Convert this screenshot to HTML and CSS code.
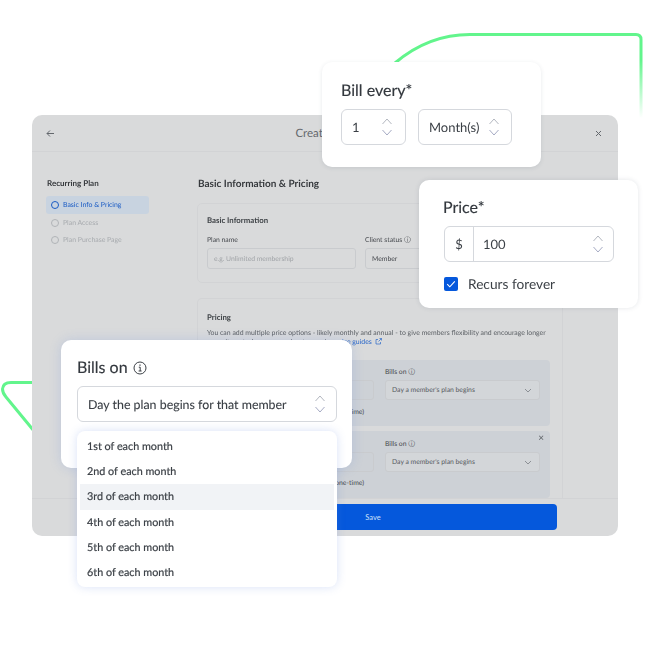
FILE: index.html
```html
<!DOCTYPE html>
<html lang="en">
<head>
<meta charset="utf-8">
<title>Create plan</title>
<link rel="stylesheet" href="styles.css">
</head>
<body>
<div class="stage">
  <svg class="deco" width="651" height="651" viewBox="0 0 651 651" fill="none">
    <defs>
      <linearGradient id="fade" gradientUnits="userSpaceOnUse" x1="0" y1="60" x2="0" y2="118">
        <stop offset="0" stop-color="#62f58c"/>
        <stop offset="1" stop-color="#62f58c" stop-opacity="0"/>
      </linearGradient>
    </defs>
    <path class="green" d="M395 63 C415 46 440 34.500 470 34.500 L636 34.500 Q641 34.500 641 39.500 L641 60"/>
    <path class="fade" d="M641 60 L641 118"/>
    <path class="green" d="M34 382.500 L11 382.500 Q3 382.500 2.500 389 Q2.500 393 6 397 L34 431"/>
  </svg>

  <section class="modal">
    <header class="modal-head">
      <svg class="head-svg" width="9" height="9" viewBox="0 0 9 9"><path d="M8 4.500H1M4 1.500l-3 3 3 3"/></svg>
      <span class="modal-title">Create Plan</span>
      <svg class="head-svg" width="9" height="9" viewBox="0 0 9 9"><path d="M2 2l5 5M7 2L2 7"/></svg>
    </header>
    <div class="modal-body">
      <nav class="side">
        <h2 class="side-title">Recurring Plan</h2>
        <div class="step active"><i class="dot"></i>Basic Info &amp; Pricing</div>
        <div class="step"><i class="dot"></i>Plan Access</div>
        <div class="step"><i class="dot"></i>Plan Purchase Page</div>
      </nav>
      <div class="content">
        <h1 class="content-title">Basic Information &amp; Pricing</h1>
        <div class="panel basic">
          <h3 class="panel-title">Basic Information</h3>
          <div class="basic-row">
            <label class="field name"><span class="lab">Plan name</span><span class="inp ph">e.g. Unlimited membership</span></label>
            <label class="field status"><span class="lab">Client status ⓘ</span><span class="inp">Member</span></label>
          </div>
        </div>
        <div class="panel pricing">
          <h3 class="panel-title">Pricing</h3>
          <p class="desc">You can add multiple price options - likely monthly and annual - to give members flexibility and encourage longer commitments. Learn more about recurring <span class="link">price guides <svg class="ext" width="7" height="7" viewBox="0 0 7 7"><path d="M3 1.500H1V6h4.500V4M3.500 3.500L6.500.500M4.500.500h2v2"/></svg></span></p>
          <div class="option">
            <span class="inp left-inp"></span>
            <div class="opt-right"><span class="lab">Bills on ⓘ</span><span class="inp sel">Day a member's plan begins<svg class="chev" width="8" height="5" viewBox="0 0 8 5"><path d="M1 1l3 3 3-3"/></svg></span></div>
            <span class="one-time">Recurs forever (one-time)</span>
          </div>
          <div class="option second">
            <span class="opt-x">×</span>
            <span class="inp left-inp"></span>
            <div class="opt-right"><span class="lab">Bills on ⓘ</span><span class="inp sel">Day a member's plan begins<svg class="chev" width="8" height="5" viewBox="0 0 8 5"><path d="M1 1l3 3 3-3"/></svg></span></div>
            <span class="one-time">Recurs forever (one-time)</span>
          </div>
        </div>
      </div>
    </div>
    <footer class="modal-foot"><button class="save">Save</button></footer>
  </section>

  <div class="card bill">
    <div class="card-title">Bill every*</div>
    <div class="bill-row">
      <div class="box b-num"><span>1</span>
        <svg class="updown" width="12" height="18" viewBox="0 0 12 18"><path d="M1.500 6l4.500-5 4.500 5"/><path class="low" d="M1.500 12l4.500 5 4.500-5"/></svg>
      </div>
      <div class="box b-unit"><span>Month(s)</span>
        <svg class="updown" width="12" height="18" viewBox="0 0 12 18"><path d="M1.500 6l4.500-5 4.500 5"/><path class="low" d="M1.500 12l4.500 5 4.500-5"/></svg>
      </div>
    </div>
  </div>

  <div class="card price">
    <div class="card-title">Price*</div>
    <div class="box b-price"><span class="cur">$</span><span class="amt">100</span>
      <svg class="updown" width="12" height="18" viewBox="0 0 12 18"><path d="M1.500 6l4.500-5 4.500 5"/><path class="low" d="M1.500 12l4.500 5 4.500-5"/></svg>
    </div>
    <div class="check-row">
      <svg class="check" width="14" height="14" viewBox="0 0 14 14"><rect width="14" height="14" rx="2" fill="#0558dc"/><path d="M3.200 7.200l2.600 2.600 5-5.400" fill="none" stroke="#fff" stroke-width="1.100"/></svg>
      <span>Recurs forever</span>
    </div>
  </div>

  <div class="card bills">
    <div class="card-title">Bills on
      <svg class="info" width="14" height="14" viewBox="0 0 14 14" fill="none"><circle cx="7" cy="7" r="6" stroke="#3a3f45" stroke-width="1"/><path d="M5.800 6.200H7.200V10M5.600 10H8.600" stroke="#3a3f45" stroke-width="1"/><path d="M7 3.600v1.200" stroke="#3a3f45" stroke-width="1.200"/></svg>
    </div>
    <div class="box b-day"><span>Day the plan begins for that member</span>
      <svg class="updown" width="12" height="18" viewBox="0 0 12 18"><path d="M1.500 6l4.500-5 4.500 5"/><path class="low" d="M1.500 12l4.500 5 4.500-5"/></svg>
    </div>
  </div>

  <ul class="menu">
    <li>1st of each month</li>
    <li>2nd of each month</li>
    <li class="hl">3rd of each month</li>
    <li>4th of each month</li>
    <li>5th of each month</li>
    <li>6th of each month</li>
  </ul>
</div>
</body>
</html>
```
FILE: styles.css
```css
* { box-sizing: border-box; }
html, body { margin: 0; padding: 0; background: #fff; }
body { font-family: Lato, "Open Sans", sans-serif; color: #3a3f45; text-rendering: geometricPrecision; }
.stage { position: relative; width: 651px; height: 651px; overflow: hidden; }
.deco { position: absolute; left: 0; top: 0; }
.green { stroke: #62f58c; stroke-width: 3; }
.fade { stroke: url(#fade); stroke-width: 3; }

.modal {
  position: absolute; left: 32px; top: 115px; width: 586px; height: 421px;
  background: #d9dadb; border-radius: 10px; display: flex; flex-direction: column; overflow: hidden;
}
.modal-head {
  height: 37px; flex: none; display: flex; align-items: center; justify-content: space-between;
  padding: 0 15px 0 14px; border-bottom: 1px solid #d2d3d5;
}
.head-svg { fill: none; stroke: #63676c; stroke-width: 1; flex: none; }
.modal-title { font-size: 11.500px; color: #63676c; }
.modal-body { flex: 1; display: flex; min-height: 0; filter: blur(.3px); }
.side { width: 165px; flex: none; padding: 26px 0 0 14px; }
.side-title { margin: 0 0 7px 1px; font-size: 8px; line-height: 11px; font-weight: 700; color: #36393d; }
.step {
  width: 103px; height: 17px; border-radius: 3px; display: flex; align-items: center;
  padding-left: 5px; gap: 4px; font-size: 6.900px; color: #a8abaf;
}
.step.active { height: 18px; background: #c8d3e0; color: #1a5bc4; }
.dot { width: 8px; height: 8px; border-radius: 50%; border: 1px solid #b0b3b7; flex: none; }
.active .dot { border-color: #1a5bc4; }
.content { flex: 1; min-width: 0; padding: 26px 0 0 0; }
.content-title { margin: 0 0 12px 1px; font-size: 10px; line-height: 13px; font-weight: 700; color: #36393d; }
.panel { border: 1px solid #d2d3d5; border-radius: 5px; width: 366px; }
.basic { height: 80px; padding: 10px 9px 0; margin-bottom: 15px; }
.panel-title { margin: 0; font-size: 7.800px; line-height: 12px; font-weight: 700; color: #3f4347; }
.basic-row { display: flex; gap: 9px; margin-top: 10px; }
.field { display: flex; flex-direction: column; gap: 3px; }
.lab { font-size: 6.800px; line-height: 9px; color: #46494e; }
.name { width: 149px; }
.status { width: 150px; }
.inp {
  height: 21px; border: 1px solid #c9cbce; border-radius: 3px; padding: 0 6px;
  font-size: 6.800px; display: flex; align-items: center; color: #46494e;
}
.ph { color: #a1a4a8; }
.pricing { height: 200px; padding: 12px 9px 0; border-bottom: 0; border-radius: 5px 5px 0 0; }
.desc { margin: 6px 0 13px; font-size: 6.900px; line-height: 9px; color: #5d6166; width: 340px; }
.link { color: #2b68c9; }
.ext { fill: none; stroke: #2b68c9; stroke-width: .7; margin-left: 1px; vertical-align: -1px; }
.option {
  margin-left: 9px; width: 334px; height: 66px; margin-bottom: 5px; background: #cdd1d6;
  border-radius: 4px; padding: 8px 10px 0 169px; position: relative;
}
.second { padding-top: 9px; height: 67px; }
.left-inp { position: absolute; left: 60px; top: 20px; width: 98px; height: 20px; }
.second .left-inp { top: 21px; }
.opt-right { display: flex; flex-direction: column; gap: 3px; width: 155px; }
.sel { height: 20px; justify-content: space-between; padding-right: 7px; background: #d3d6d9; color: #565a5f; font-weight: 400; }
.chev { fill: none; stroke: #8c9095; stroke-width: 1; }
.opt-x { position: absolute; right: 6px; top: 1px; font-size: 10px; color: #5d6166; }
.one-time { position: absolute; right: 186px; top: 48px; font-size: 6.800px; color: #46494e; }
.modal-foot { height: 38px; flex: none; border-top: 1px solid #d2d3d5; padding: 5px 61px 0 157px; }
.save {
  display: block; width: 100%; height: 26px; border: 0; border-radius: 4px; background: #0558dc;
  color: #cfe0fa; font: 7.500px Lato, sans-serif;
}

.card { position: absolute; background: #fff; border-radius: 10px; }
.card-title { font-size: 16px; line-height: 20px; color: #33383e; -webkit-text-stroke: .15px #33383e; }
.box {
  border: 1px solid #d5d8dd; border-radius: 6px; height: 36px; display: flex; align-items: center;
  justify-content: space-between; font-size: 13px; color: #3a3f45;
}
.updown { fill: none; stroke: #b3b7c0; stroke-width: 1; flex: none; }
.updown .low { stroke: #a6abc4; }

.bill { left: 322px; top: 62px; width: 219px; height: 105px; padding: 19px 19px 0; box-shadow: 0 1px 4px rgba(60,70,90,.12); }
.bill-row { display: flex; gap: 12px; margin-top: 8px; }
.b-num { width: 65px; padding: 0 12px 0 10px; }
.b-unit { width: 94px; padding: 0 11px 0 10px; }

.price { left: 419px; top: 180px; width: 219px; height: 128px; padding: 18px 24px 0 25px; box-shadow: 0 0 5px rgba(60,70,90,.14); }
.price .card-title { margin-left: -1px; }
.b-price { width: 170px; height: 36px; margin-top: 8px; padding-right: 9px; justify-content: flex-start; }
.cur { width: 29px; height: 100%; display: flex; align-items: center; justify-content: center; border-right: 1px solid #d5d8dd; flex: none; }
.amt { padding-left: 9px; flex: 1; }
.check-row { display: flex; align-items: center; gap: 10px; margin-top: 13px; font-size: 13.700px; line-height: 18px; color: #3a3f45; }
.check { flex: none; }

.bills { left: 61px; top: 340px; width: 291px; height: 128px; padding: 18px 16px 0; box-shadow: 0 0 12px rgba(90,130,220,.22); }
.bills .card-title { display: flex; align-items: center; gap: 5px; }
.info { flex: none; }
.b-day { width: 260px; margin-top: 8px; padding: 0 10px; font-size: 12.400px; -webkit-text-stroke: .1px #3a3f45; }

.menu {
  position: absolute; left: 77px; top: 431px; width: 260px; height: 156px; margin: 0; padding: 3px 3px;
  list-style: none; background: #fff; border-radius: 8px; box-shadow: 0 0 10px rgba(90,130,220,.24);
}
.menu li { height: 25.200px; display: flex; align-items: center; padding-left: 7px; font-size: 10.800px; color: #3a3f45; -webkit-text-stroke: .2px #3a3f45; }
.menu .hl { background: #f1f3f6; }
```
